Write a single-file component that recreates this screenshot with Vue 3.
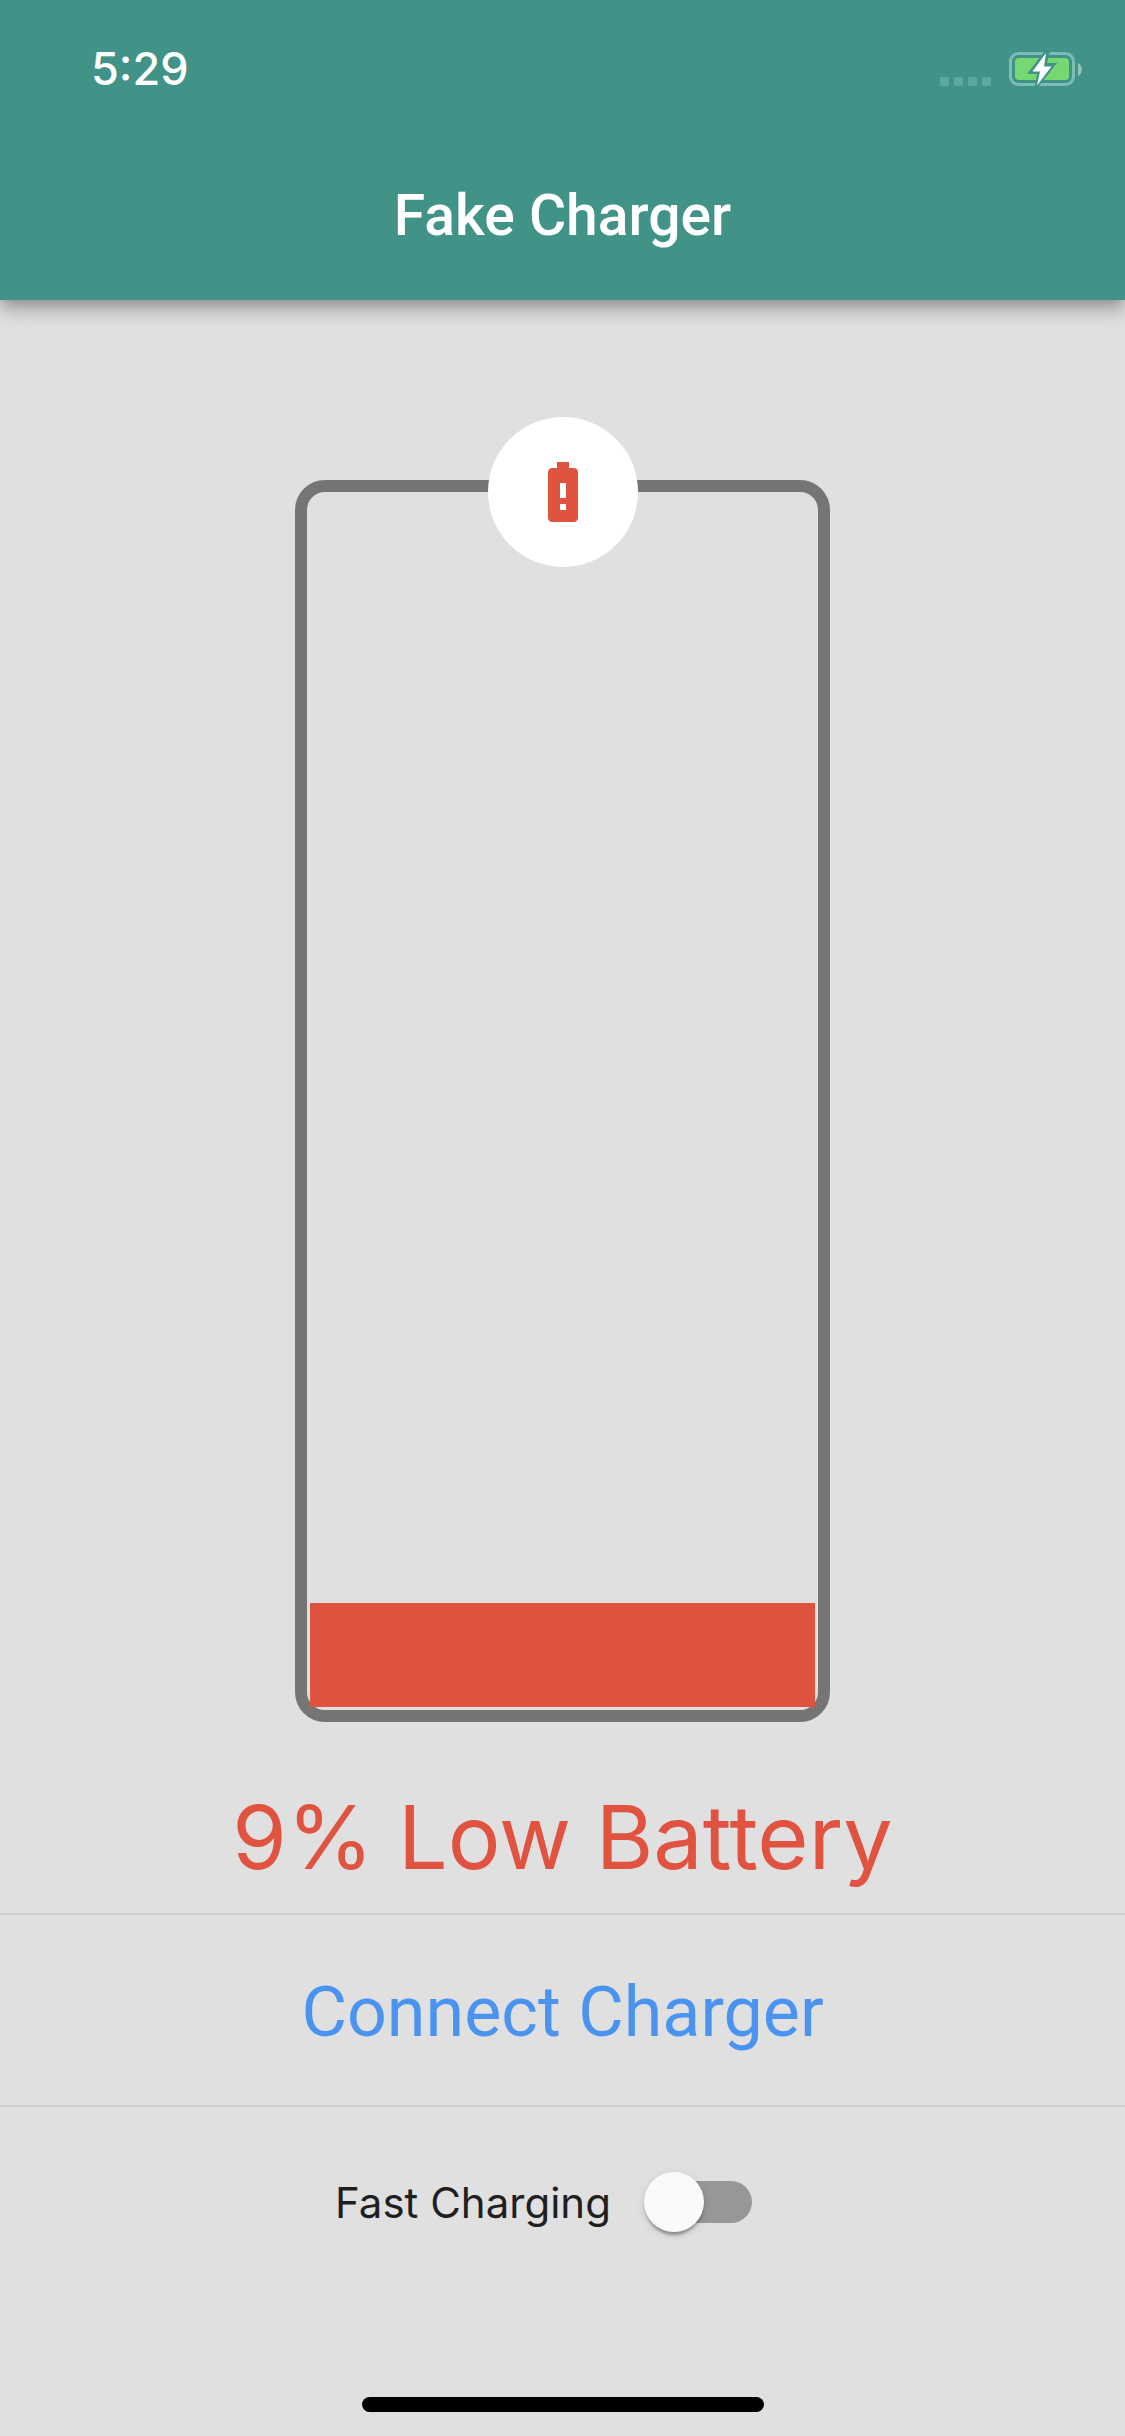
<script setup>
import { computed, ref } from 'vue'

const level = ref(9)
const fastCharging = ref(false)
const status = computed(() => (level.value < 20 ? 'Low Battery' : 'Battery'))
</script>

<template>
  <div class="app">
    <header class="app-bar">
      <div class="status-bar">
        <time class="clock">5:29</time>
        <div class="indicators">
          <div class="signal" aria-hidden="true"><i></i><i></i><i></i><i></i></div>
          <svg class="charge" viewBox="0 0 74 34" aria-hidden="true">
            <rect x="1.5" y="1.5" width="63" height="31" rx="8" fill="none" stroke="#7dbcb4" stroke-width="3" />
            <path d="M69 11c5 2 5 11 0 13z" fill="#8fc4bd" />
            <rect x="6" y="6" width="54" height="22" rx="4" fill="#76d872" />
            <path d="M35 0L18 22H28L26 34H30L48 11H38L41 0z" fill="#429387" />
            <path d="M37 1L23.500 19.500H31L28 33.500L42.500 14.500H35z" fill="#fff" />
          </svg>
        </div>
      </div>
      <h1 class="title">Fake Charger</h1>
    </header>

    <main class="content">
      <div class="cell">
        <div class="badge">
          <svg viewBox="0 0 24 24" aria-hidden="true">
            <path d="M15.670 4H14V2h-4v2H8.330C7.600 4 7 4.600 7 5.330v15.330C7 21.400 7.600 22 8.330 22h7.330c.740 0 1.340-.600 1.340-1.330V5.330C17 4.600 16.400 4 15.670 4zM13 18h-2v-2h2v2zm0-4h-2V9h2v5z" />
          </svg>
        </div>
        <div class="fill" :style="{ flexGrow: level / 100 }"></div>
      </div>
      <p class="level">{{ level }}% {{ status }}</p>
      <button class="connect" type="button">Connect Charger</button>
      <div class="option">
        <label for="fast">Fast Charging</label>
        <input id="fast" v-model="fastCharging" class="switch" type="checkbox" role="switch" />
      </div>
    </main>

    <footer class="home"><div class="home-bar"></div></footer>
  </div>
</template>

<style>
body {
  margin: 0;
  background: #e0e0e0;
}
</style>

<style scoped>
.app {
  display: flex;
  flex-direction: column;
  min-height: 100vh;
  background: #e0e0e0;
  font-family: Inter, "Liberation Sans", sans-serif;
}
.app-bar {
  background: #429387;
  color: #fff;
  box-shadow: 0 6px 12px -3px rgba(0, 0, 0, 0.2), 0 12px 15px rgba(0, 0, 0, 0.14), 0 3px 30px rgba(0, 0, 0, 0.12);
}
.status-bar {
  display: flex;
  justify-content: space-between;
  align-items: center;
  box-sizing: border-box;
  height: 132px;
  padding: 6px 42px 0 91px;
}
.clock {
  font-size: 45px;
  font-weight: 500;
  line-height: 54px;
}
.indicators {
  display: flex;
  align-items: flex-end;
  gap: 18px;
}
.signal {
  display: flex;
  gap: 5px;
}
.signal i {
  width: 9px;
  height: 9px;
  border-radius: 2px;
  background: #5ba9a0;
}
.charge {
  display: block;
  width: 74px;
  height: 34px;
}
.title {
  margin: 0;
  font-family: Roboto, "Liberation Sans", sans-serif;
  font-size: 57px;
  font-weight: 500;
  line-height: 168px;
  text-align: center;
}
.content {
  display: flex;
  flex: 1;
  flex-direction: column;
  padding-top: 180px;
}
.cell {
  position: relative;
  display: flex;
  flex: 1;
  flex-direction: column;
  justify-content: flex-end;
  align-self: center;
  box-sizing: border-box;
  width: 80%;
  max-width: 535px;
  min-height: 480px;
  padding: 60px 3px 3px;
  border: 12px solid #757575;
  border-radius: 30px;
}
.badge {
  position: absolute;
  top: -75px;
  left: 50%;
  display: flex;
  align-items: center;
  justify-content: center;
  width: 150px;
  height: 150px;
  border-radius: 50%;
  background: #fff;
  transform: translateX(-50%);
}
.badge svg {
  width: 72px;
  height: 72px;
  fill: #e05340;
}
.fill {
  flex-basis: 0;
  background: #e05340;
}
.level {
  margin: 0;
  padding: 61px 0 22px;
  color: #e05340;
  font-size: 88px;
  line-height: 108px;
  text-align: center;
}
.connect {
  padding: 4px 0 0;
  border: solid #d0d0d0;
  border-width: 2px 0;
  background: none;
  color: #4a94ef;
  font-family: Roboto, "Liberation Sans", sans-serif;
  font-size: 70px;
  line-height: 186px;
  text-align: center;
}
.option {
  display: flex;
  align-items: center;
  justify-content: center;
  height: 190px;
  color: #1f1f1f;
  font-size: 42px;
}
.switch {
  position: relative;
  width: 99px;
  height: 42px;
  margin: 0 38px 0 42px;
  appearance: none;
  border-radius: 21px;
  background: #979797;
}
.switch::before {
  content: "";
  position: absolute;
  top: -9px;
  left: -9px;
  width: 60px;
  height: 60px;
  border-radius: 50%;
  background: #fafafa;
  box-shadow: 0 6px 3px -3px rgba(0, 0, 0, 0.2), 0 3px 3px rgba(0, 0, 0, 0.14), 0 3px 9px rgba(0, 0, 0, 0.12);
}
.switch:checked::before {
  left: 48px;
}
.home {
  display: flex;
  justify-content: center;
  padding: 100px 0 24px;
}
.home-bar {
  width: 402px;
  height: 15px;
  border-radius: 8px;
  background: #000;
}
</style>
